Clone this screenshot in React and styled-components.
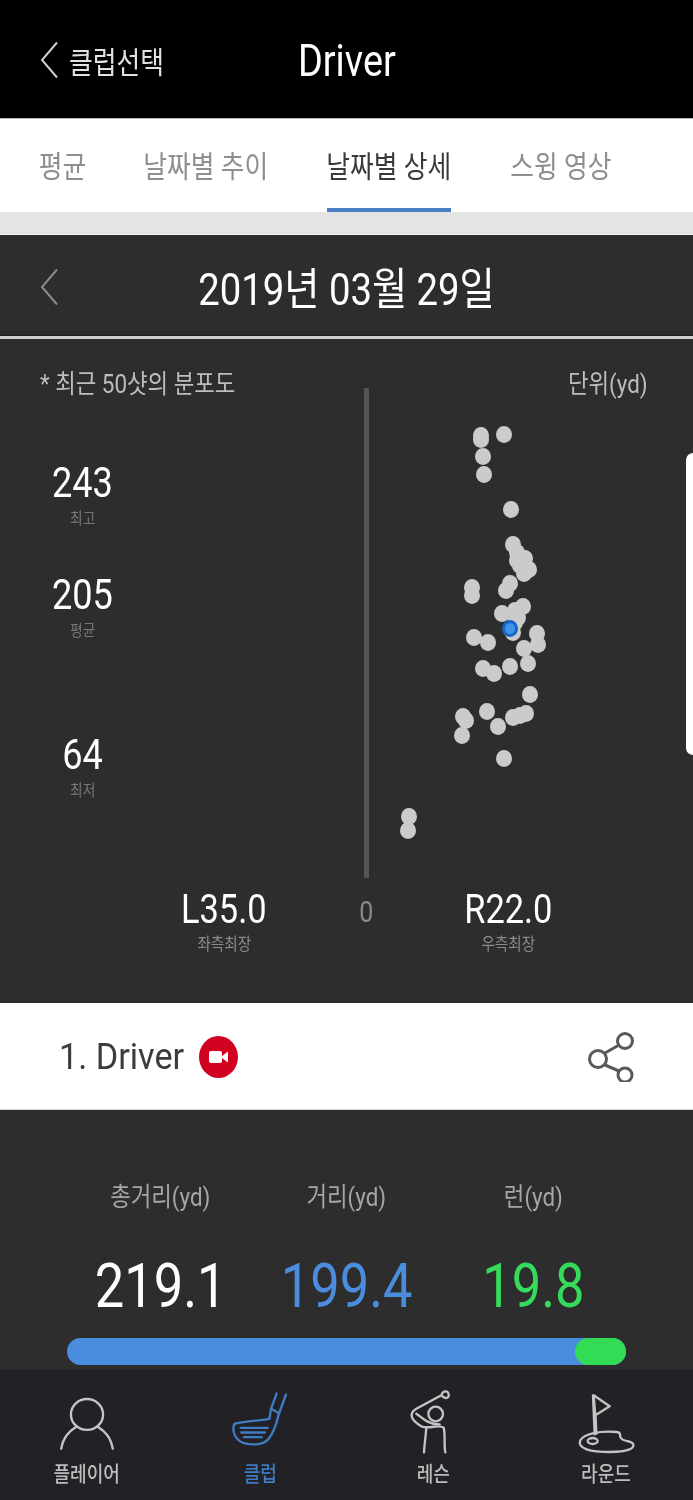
import React from "react";
import styled, { createGlobalStyle, css } from "styled-components";

const GlobalStyle = createGlobalStyle`
html, body { margin:0; padding:0; background:#2d2d2d; }
body { font-family:Roboto,"Noto Sans CJK KR",sans-serif; }
`;

// the whole screenshot is a little narrower than the fonts we have
const squeezed = css`
display:inline-block;
white-space:nowrap;
transform:scaleX(.86);
`;

const SHOTS = [
  [481,435],[481,439],[504,434],[483,456],[484,474],[511,509],[513,544],[517,552],[517,560],[525,558],
  [520,565],[529,569],[524,573],[510,583],[506,590],[472,587],[472,595],[523,606],[515,610],[502,613],
  [518,617],[515,622],[513,632],[537,633],[538,644],[524,648],[474,637],[488,642],[528,663],[510,666],
  [483,668],[494,673],[530,694],[487,711],[513,717],[526,713],[520,715],[463,716],[466,720],[462,735],
  [498,726],[504,758],[409,816],[408,830],
];
const PLOT_LEFT = 125;
const PLOT_TOP = 388;

const Chevron = ({ color }) => (
  <ChevronIcon viewBox="0 0 18 38" fill="none" stroke={color} strokeWidth="2">
    <path d="M17 1.5 L2 19 L17 36.5" />
  </ChevronIcon>
);

const VideoBadge = () => (
  <BadgeIcon viewBox="0 0 39 42">
    <ellipse cx="19.5" cy="21" rx="19.5" ry="21" fill="#d0021f" />
    <rect x="10" y="15" width="13" height="12" rx="2" fill="#fff" />
    <path d="M23 20 L29 15.5 V26.5 L23 22 Z" fill="#fff" />
  </BadgeIcon>
);

const ShareIcon = () => (
  <ShareSvg viewBox="0 0 48 50" fill="none" stroke="#595959" strokeWidth="3">
    <circle cx="10" cy="27" r="8.5" />
    <circle cx="37" cy="9" r="7.5" />
    <circle cx="37" cy="43" r="7" />
    <path d="M17 21 L31 13 M17 33 L31 39" />
  </ShareSvg>
);

const PlayerIcon = () => (
  <NavSvg $b={48} width="57" height="57" viewBox="175 225 170 170" stroke="#c4c4c4">
    <ellipse cx="260" cy="283" rx="48" ry="46" />
    <path d="M183 385 C190 350 205 335 228 320 M337 385 C330 350 315 335 292 320" />
  </NavSvg>
);

const ClubIcon = () => (
  <NavSvg $b={52} width="60" height="57" viewBox="690 215 180 170" stroke="#3f7cc4">
    <path d="M808 298 C770 305 730 304 703 313 C695 335 705 362 732 371 C760 378 792 376 806 358 C820 340 830 312 836 285" />
    <path d="M830 222 L813 268 L808 298 M858 225 L836 285 M814 268 L838 282" />
    <path d="M722 325 H803 M724 339 H795 M732 353 H785" />
  </NavSvg>
);

const LessonIcon = () => (
  <NavSvg $b={45} $dx={-3} width="44" height="68" viewBox="175 200 132 204" stroke="#c4c4c4">
    <path d="M275 225 C280 208 300 210 297 228 C292 238 282 232 275 225 L200 265 C175 280 185 300 215 318 C240 328 265 310 282 322 C288 345 282 375 287 396" />
    <circle cx="258" cy="281" r="22" />
    <path d="M200 280 C215 290 232 312 270 312 M230 322 C228 350 224 375 223 396" />
  </NavSvg>
);

const FlagIcon = () => (
  <NavSvg $b={46} width="58" height="62" viewBox="680 215 174 186" stroke="#c4c4c4">
    <path d="M728 225 L733 342 M736 290 L738 340 M730 225 L778 258 L735 285 Z" />
    <path d="M800 335 C750 330 700 340 690 360 C680 385 720 395 780 395 C830 395 855 385 848 370 C840 360 815 365 810 350 C810 340 805 335 800 335 Z" />
    <ellipse cx="727" cy="362" rx="15" ry="9" />
  </NavSvg>
);

const App = () => {
  return (
    <Page>
      <GlobalStyle />
      <Header>
        <BackLink>
          <Chevron color="#cfcfcf" />
          <BackLabel>클럽선택</BackLabel>
        </BackLink>
        <HeaderTitle>Driver</HeaderTitle>
      </Header>

      <Tabs>
        <Tab $w={45}><TabLabel>평균</TabLabel></Tab>
        <Tab $w={124}><TabLabel>날짜별 추이</TabLabel></Tab>
        <Tab $w={124} $active><TabLabel>날짜별 상세</TabLabel></Tab>
        <Tab $w={101}><TabLabel>스윙 영상</TabLabel></Tab>
      </Tabs>
      <Strip />

      <DateBar>
        <Chevron color="#8a8a8a" />
        <DateText>2019년 03월 29일</DateText>
      </DateBar>

      <ChartPanel>
        <EdgeHandle />
        <ChartTop>
          <Note>* 최근 50샷의 분포도</Note>
          <Note>단위(yd)</Note>
        </ChartTop>
        <ChartBody>
          <StatColumn>
            <Stat $top={72}><StatValue>243</StatValue><StatLabel>최고</StatLabel></Stat>
            <Stat $top={43}><StatValue>205</StatValue><StatLabel>평균</StatLabel></Stat>
            <Stat $top={91}><StatValue>64</StatValue><StatLabel>최저</StatLabel></Stat>
          </StatColumn>
          <Plot>
            <CenterLine />
            {SHOTS.map(([x, y], i) => (
              <Shot key={i} style={{ left: x - PLOT_LEFT, top: y - PLOT_TOP }} />
            ))}
            <LastShot style={{ left: 510 - PLOT_LEFT, top: 628 - PLOT_TOP }} />
          </Plot>
        </ChartBody>
        <Spread>
          <Stat><SpreadValue>L35.0</SpreadValue><SpreadLabel>좌측최장</SpreadLabel></Stat>
          <Stat><Zero>0</Zero></Stat>
          <Stat><SpreadValue>R22.0</SpreadValue><SpreadLabel>우측최장</SpreadLabel></Stat>
        </Spread>
      </ChartPanel>

      <ShotRow>
        <ShotName>1. Driver</ShotName>
        <VideoBadge />
        <ShareIcon />
      </ShotRow>

      <Numbers>
        <NumberGrid>
          <NumberCell><NumberLabel>총거리(yd)</NumberLabel><NumberValue $color="#ffffff">219.1</NumberValue></NumberCell>
          <NumberCell><NumberLabel>거리(yd)</NumberLabel><NumberValue $color="#4a8ddf">199.4</NumberValue></NumberCell>
          <NumberCell><NumberLabel>런(yd)</NumberLabel><NumberValue $color="#35dc5c">19.8</NumberValue></NumberCell>
        </NumberGrid>
        <Bar><BarRun /></Bar>
      </Numbers>

      <BottomNav>
        <NavItem><PlayerIcon /><NavLabel>플레이어</NavLabel></NavItem>
        <NavItem $active><ClubIcon /><NavLabel>클럽</NavLabel></NavItem>
        <NavItem><LessonIcon /><NavLabel>레슨</NavLabel></NavItem>
        <NavItem><FlagIcon /><NavLabel>라운드</NavLabel></NavItem>
      </BottomNav>
    </Page>
  );
};
export default App;

const Page = styled.div`
display:flex;
flex-direction:column;
width:693px;
height:1500px;
overflow:hidden;
background:#2d2d2d;
`;

const ChevronIcon = styled.svg`
width:18px;
height:38px;
flex:none;
`;

const Header = styled.div`
position:relative;
display:flex;
align-items:center;
justify-content:center;
height:118px;
flex:none;
background:#000;
border-bottom:1px solid #b8b8b8;
box-sizing:content-box;
`;
const BackLink = styled.div`
position:absolute;
left:40px;
top:38px;
display:flex;
align-items:center;
gap:11px;
`;
const BackLabel = styled.span`
${squeezed}
transform-origin:left center;
font-size:30px;
color:#e2e2e2;
`;
const HeaderTitle = styled.span`
${squeezed}
font-size:44px;
line-height:60px;
color:#fff;
margin-top:4px;
`;

const Tabs = styled.div`
display:flex;
gap:59px;
height:93px;
flex:none;
padding-left:40px;
background:#fff;
box-sizing:border-box;
`;
const Tab = styled.div`
display:flex;
align-items:center;
justify-content:center;
box-sizing:border-box;
width:${(props) => props.$w}px;
color:${(props) => (props.$active ? "#3a3a3a" : "#8f8f8f")};
border-bottom:4px solid ${(props) => (props.$active ? "#4a80c8" : "transparent")};
`;
const TabLabel = styled.span`
${squeezed}
font-size:30px;
line-height:1;
margin-top:7px;
`;
const Strip = styled.div`
height:22px;
flex:none;
background:#e4e4e4;
border-bottom:1px solid #f2f2f2;
`;

const DateBar = styled.div`
position:relative;
display:flex;
align-items:center;
justify-content:center;
height:100px;
flex:none;
background:#2d2d2d;
border-bottom:3px solid #cfcfcf;
box-shadow:inset 0 -1px 0 #1e1e1e;
padding-bottom:1px;
box-sizing:content-box;
& > svg {
  position:absolute;
  left:40px;
  top:33px;
}
`;
const DateText = styled.span`
${squeezed}
font-size:44.5px;
color:#fff;
`;

const ChartPanel = styled.div`
position:relative;
height:664px;
flex:none;
background:#2d2d2d;
`;
const EdgeHandle = styled.div`
position:absolute;
right:0;
top:114px;
width:7px;
height:302px;
background:#fff;
border-radius:10px 0 0 10px;
`;
const ChartTop = styled.div`
display:flex;
justify-content:space-between;
height:49px;
padding:32px 45px 0 40px;
box-sizing:border-box;
`;
const Note = styled.span`
${squeezed}
font-size:26px;
line-height:26px;
color:#bdbdbd;
transform-origin:left center;
&:last-child {
  transform-origin:right center;
}
`;
const ChartBody = styled.div`
display:flex;
height:490px;
`;
const StatColumn = styled.div`
display:flex;
flex-direction:column;
width:85px;
margin-left:40px;
flex:none;
`;
const Stat = styled.div`
display:flex;
flex-direction:column;
align-items:center;
margin-top:${(props) => props.$top || 0}px;
`;
const StatValue = styled.span`
${squeezed}
font-size:42px;
line-height:46px;
color:#fff;
`;
const SpreadValue = styled(StatValue)`
font-size:40px;
`;
const StatLabel = styled.span`
${squeezed}
font-size:16px;
line-height:20px;
margin-top:3px;
color:#777;
`;
const Plot = styled.div`
position:relative;
flex:1;
`;
const CenterLine = styled.div`
width:5px;
height:100%;
margin-left:239px;
background:#555;
`;
const Shot = styled.div`
position:absolute;
width:16px;
height:17px;
margin:-8px 0 0 -8px;
border-radius:50%;
background:#cbcbcb;
filter:blur(.6px);
`;
const LastShot = styled(Shot)`
width:10px;
height:11px;
background:#3f92ea;
border:3px solid #1665c4;
`;
const Spread = styled.div`
display:grid;
grid-template-columns:repeat(3,142px);
padding:9px 0 0 153px;
`;
const SpreadLabel = styled(StatLabel)`
font-size:17px;
margin-top:1px;
color:#8c8c8c;
`;
const Zero = styled.span`
${squeezed}
font-size:29px;
line-height:50px;
color:#8a8a8a;
`;

const ShotRow = styled.div`
display:flex;
align-items:center;
height:107px;
flex:none;
padding:2px 57px 0 59px;
background:#fff;
box-sizing:border-box;
border-bottom:1px solid #cfcfcf;
`;
const ShotName = styled.span`
${squeezed}
transform:scaleX(.95);
transform-origin:left center;
font-size:36px;
color:#3c3c3c;
`;
const BadgeIcon = styled.svg`
width:39px;
height:42px;
margin-left:8px;
`;
const ShareSvg = styled.svg`
width:48px;
height:50px;
margin-left:auto;
`;

const Numbers = styled.div`
flex:1;
padding:69px 67px 0;
background:#2d2d2d;
`;
const NumberGrid = styled.div`
display:grid;
grid-template-columns:repeat(3,186.5px);
`;
const NumberCell = styled.div`
display:flex;
flex-direction:column;
align-items:center;
`;
const NumberLabel = styled.span`
${squeezed}
font-size:26px;
line-height:36px;
color:#a6a6a6;
`;
const NumberValue = styled.span`
${squeezed}
font-size:61px;
line-height:70px;
margin-top:36px;
color:${(props) => props.$color};
`;
const Bar = styled.div`
display:flex;
justify-content:flex-end;
height:27px;
margin-top:17px;
border-radius:14px;
background:#4a8ddf;
`;
const BarRun = styled.div`
width:51px;
border-radius:14px;
background:#32dc55;
`;

const BottomNav = styled.div`
display:grid;
grid-template-columns:repeat(4,1fr);
height:130px;
flex:none;
background:#222226;
`;
const NavItem = styled.div`
position:relative;
display:flex;
flex-direction:column;
align-items:center;
justify-content:flex-end;
height:100%;
padding-bottom:12px;
box-sizing:border-box;
color:${(props) => (props.$active ? "#3f7cc4" : "#bdbdbd")};
`;
const NavSvg = styled.svg`
position:absolute;
left:50%;
bottom:${(props) => props.$b}px;
transform:translateX(calc(-50% + ${(props) => props.$dx || 0}px));
fill:none;
stroke-width:7;
stroke-linecap:round;
stroke-linejoin:round;
`;
const NavLabel = styled.span`
${squeezed}
font-size:21px;
line-height:28px;
font-weight:500;
`;
